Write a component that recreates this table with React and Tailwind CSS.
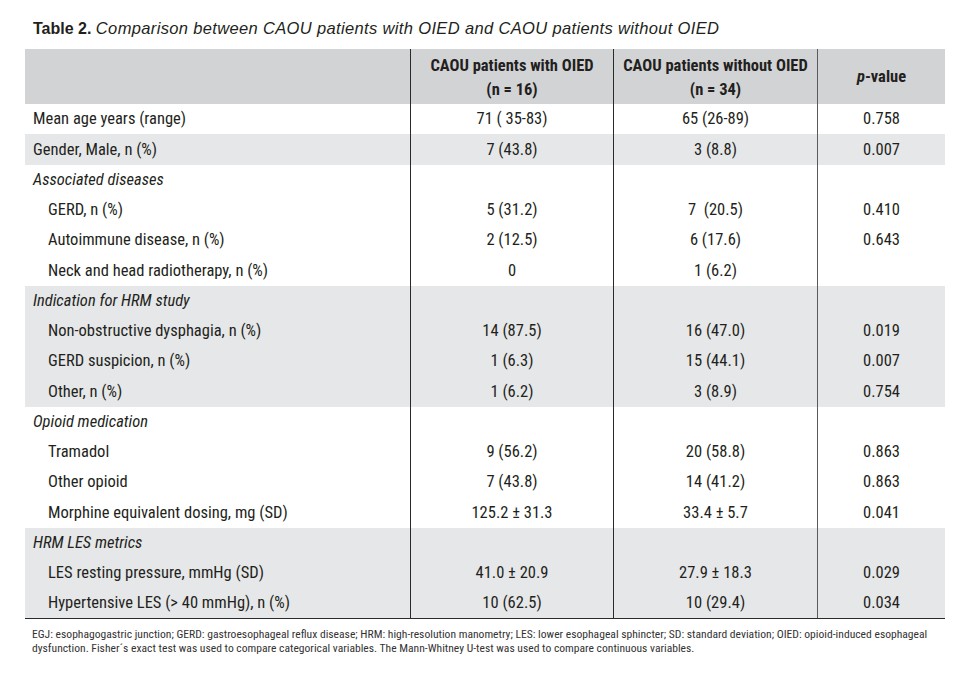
import React from "react";

const sections = [
  { bg: "bg-white", rows: [{ label: "Mean age years (range)", a: "71 ( 35-83)", b: "65 (26-89)", p: "0.758" }] },
  { bg: "bg-[#e6e7e8]", rows: [{ label: "Gender, Male, n (%)", a: "7 (43.8)", b: "3 (8.8)", p: "0.007" }] },
  {
    bg: "bg-white",
    rows: [
      { label: "Associated diseases", head: true },
      { label: "GERD, n (%)", a: "5 (31.2)", b: "7  (20.5)", p: "0.410", ind: true },
      { label: "Autoimmune disease, n (%)", a: "2 (12.5)", b: "6 (17.6)", p: "0.643", ind: true },
      { label: "Neck and head radiotherapy, n (%)", a: "0", b: "1 (6.2)", p: "", ind: true },
    ],
  },
  {
    bg: "bg-[#e6e7e8]",
    rows: [
      { label: "Indication for HRM study", head: true },
      { label: "Non-obstructive dysphagia, n (%)", a: "14 (87.5)", b: "16 (47.0)", p: "0.019", ind: true },
      { label: "GERD suspicion, n (%)", a: "1 (6.3)", b: "15 (44.1)", p: "0.007", ind: true },
      { label: "Other, n (%)", a: "1 (6.2)", b: "3 (8.9)", p: "0.754", ind: true },
    ],
  },
  {
    bg: "bg-white",
    rows: [
      { label: "Opioid medication", head: true },
      { label: "Tramadol", a: "9 (56.2)", b: "20 (58.8)", p: "0.863", ind: true },
      { label: "Other opioid", a: "7 (43.8)", b: "14 (41.2)", p: "0.863", ind: true },
      { label: "Morphine equivalent dosing, mg (SD)", a: "125.2 ± 31.3", b: "33.4 ± 5.7", p: "0.041", ind: true },
    ],
  },
  {
    bg: "bg-[#e6e7e8]",
    rows: [
      { label: "HRM LES metrics", head: true },
      { label: "LES resting pressure, mmHg (SD)", a: "41.0 ± 20.9", b: "27.9 ± 18.3", p: "0.029", ind: true },
      { label: "Hypertensive LES (> 40 mmHg), n (%)", a: "10 (62.5)", b: "10 (29.4)", p: "0.034", ind: true },
    ],
  },
];

const grid = "grid grid-cols-[385px_203px_204px_128px]";

function Row({ r }) {
  return (
    <div className={`${grid} h-[30.25px] items-stretch`}>
      <div className={`flex items-center pt-[1px] ${r.ind ? "pl-[23px]" : "pl-[8px]"} ${r.head ? "italic" : ""}`}>{r.label}</div>
      <div className="flex items-center justify-center pt-[1px] border-l border-[#2a2a2a] whitespace-pre">{r.a}</div>
      <div className="flex items-center justify-center pt-[1px] border-l border-[#2a2a2a] whitespace-pre">{r.b}</div>
      <div className="flex items-center justify-center pt-[1px] border-l border-[#5a5a5a]">{r.p}</div>
    </div>
  );
}

export default function App() {
  return (
    <div className="w-[956px] h-[700px] bg-white text-[#231f20]">
      <div className="pt-[18px] pl-[33px] text-[16px] leading-[20px] font-['Liberation_Sans',Arial,sans-serif] whitespace-nowrap">
        <span className="font-bold">Table 2.</span>{" "}
        <span className="italic text-[16.5px] tracking-[0.35px]">Comparison between CAOU patients with OIED and CAOU patients without OIED</span>
      </div>
      <div className="ml-[25px] mt-[10px] w-[920px] font-['Roboto',sans-serif] [font-stretch:75%] text-[16.5px]">
        <div className={`${grid} h-[55px] bg-[#d2d3d5] font-bold`}>
          <div></div>
          <div className="flex flex-col items-center justify-center border-l border-[#2a2a2a] leading-[24px] pt-[2px] whitespace-nowrap">
            <div>CAOU patients with OIED</div>
            <div>(n = 16)</div>
          </div>
          <div className="flex flex-col items-center justify-center border-l border-[#2a2a2a] leading-[24px] pt-[2px] whitespace-nowrap">
            <div>CAOU patients without OIED</div>
            <div>(n = 34)</div>
          </div>
          <div className="flex items-center justify-center border-l border-[#5a5a5a] pt-[2px]">
            <span><span className="italic">p</span>-value</span>
          </div>
        </div>
        <div className="border-b-[1.5px] border-[#2a2a2a] font-normal">
          {sections.map((s, i) => (
            <div key={i} className={s.bg}>
              {s.rows.map((r, j) => (
                <Row key={j} r={r} />
              ))}
            </div>
          ))}
        </div>
      </div>
      <div className="pl-[32px] pt-[8px] w-[940px] font-['Roboto',sans-serif] [font-stretch:75%] text-[11.6px] leading-[14px] text-[#333]">
        EGJ: esophagogastric junction; GERD: gastroesophageal reflux disease; HRM: high-resolution manometry; LES: lower esophageal sphincter; SD: standard deviation; OIED: opioid-induced esophageal dysfunction. Fisher´s exact test was used to compare categorical variables. The Mann-Whitney U-test was used to compare continuous variables.
      </div>
    </div>
  );
}
